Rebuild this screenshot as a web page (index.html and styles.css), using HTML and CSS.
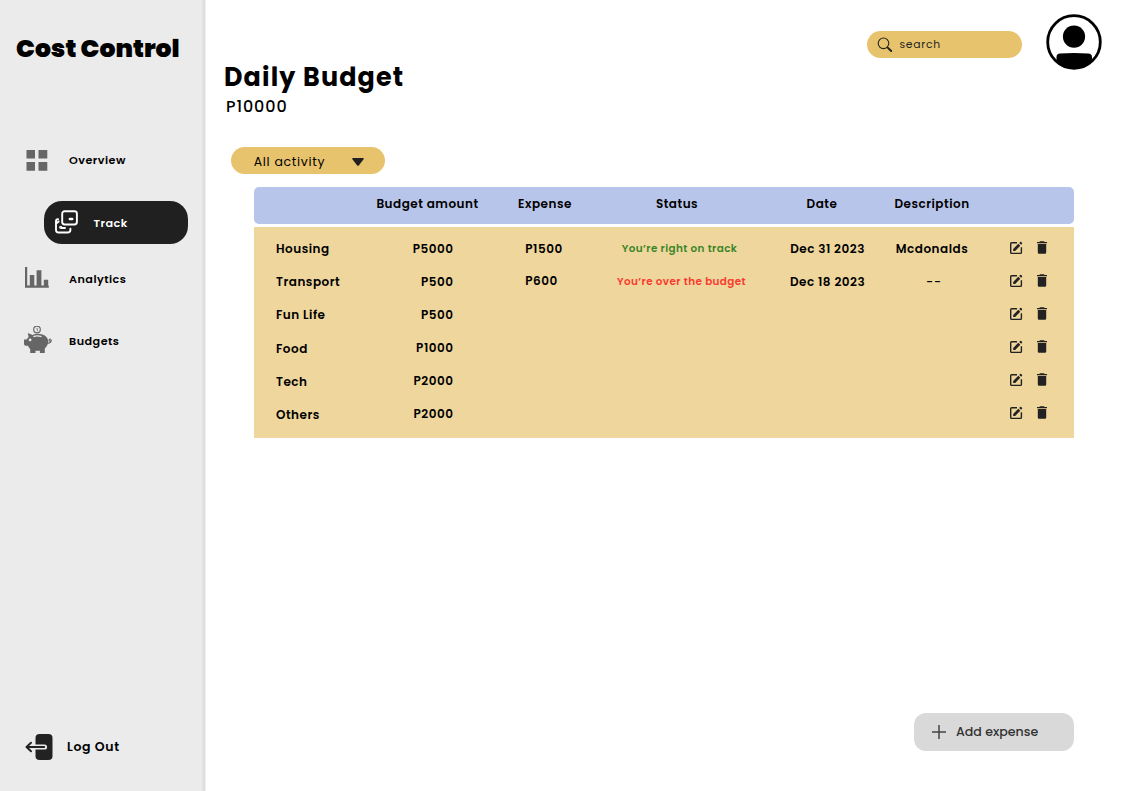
FILE: index.html
```html
<!DOCTYPE html>
<html lang="en">
<head>
<meta charset="utf-8">
<title>Cost Control</title>
<link rel="stylesheet" href="styles.css">
</head>
<body>
<svg class="defs" width="0" height="0">
  <symbol id="edit" viewBox="0 0 14 14"><path d="M8 1.7H2.6Q1.7 1.7 1.7 2.6V11.6Q1.7 12.4 2.6 12.4H11.5Q12.4 12.4 12.4 11.6V6.2" fill="none" stroke="currentColor" stroke-width="1.4"/><path d="M4.2 7.9 9.3 2.8 11.3 4.8 6.2 9.9H4.2ZM10.2 1.9 11.2 1Q11.7.6 12.2 1L13 1.8Q13.4 2.3 13 2.8L12.1 3.8Z" fill="currentColor"/></symbol>
  <symbol id="trash" viewBox="0 0 10 13"><path d="M3 .3H7L7.6 1H10V2.3H0V1H2.4ZM.8 3H9.2V11.5Q9.2 12.7 8 12.7H2Q.8 12.7.8 11.5Z" fill="currentColor"/></symbol>
</svg>
<div class="app">
  <aside class="sidebar">
    <div class="brand">Cost Control</div>
    <nav class="nav">
      <a class="nav-item"><svg class="nav-icon" viewBox="0 0 28 28"><path d="M2.5 3H11V11.5H2.5ZM14.5 3H23.3V11.5H14.5ZM2.5 15H11V23.7H2.5ZM14.5 15H23.3V23.7H14.5Z" fill="#666"/></svg><span>Overview</span></a>
      <a class="nav-item active"><svg class="track-icon" viewBox="0 0 24 24" fill="none" stroke="#fff" stroke-width="1.9" stroke-linecap="round" stroke-linejoin="round"><rect x="7.2" y="1.3" width="14.7" height="13.2" rx="2.4"/><path d="M14.9 9H17.1" stroke-width="2.7"/><path d="M3.1 9.3H2.8Q1 9.3 1 11.2V20Q1 22.5 3.5 22.5H12.5Q15.4 22.5 15.4 20V18.6M1.5 13.2 3.7 11.4M6.5 18H10"/><circle cx="5.7" cy="17.2" r=".6"/></svg><span>Track</span></a>
      <a class="nav-item lower"><svg class="nav-icon" viewBox="0 0 28 28"><path d="M1 3H3.2V21.5H5.8V11H10.3V21.5H12.6V6.3H17.4V21.5H19.8V15.7H24.2V21.5H24.8V23.8H1Z" fill="#666"/></svg><span>Analytics</span></a>
      <a class="nav-item lower"><svg class="nav-icon" viewBox="0 0 28 28"><circle cx="13" cy="3.5" r="3.3" fill="none" stroke="#666" stroke-width="1.2"/><path d="M12.5 2.5H13.3V5.2" fill="none" stroke="#666" stroke-width=".8"/><path d="M3.8 6.9 8.6 8.9Q13 7 18.5 8.6 23.4 10.5 24.3 14.9 24.3 19.2 20.8 22.4V27H15.9V24.7H11.5V27H6.2V23.3L3.8 19.8H1.8Q0 19.8 0 18V13.5H2.5L4.6 10.9Z" fill="#666"/><circle cx="6.1" cy="13.9" r="1.4" fill="#ebebeb"/><path d="M9.4 10.7Q13 9.2 17.5 10.7" fill="none" stroke="#ebebeb" stroke-width="1.3"/><path d="M23.5 17.4Q27.5 16.7 27.2 14.2 26.4 12.4 25.2 13.7 24.6 15.4 27.6 15.3" fill="none" stroke="#666" stroke-width="1.1"/></svg><span>Budgets</span></a>
    </nav>
    <a class="logout"><svg class="logout-icon" viewBox="0 0 28 28"><rect x="10.5" y="1" width="17" height="26" rx="4" fill="#222"/><path d="M10 14H19.5" stroke="#ebebeb" stroke-width="5.2" stroke-linecap="round"/><path d="M1.8 14H19.2M6 9.8 1.5 14 6 18.2" fill="none" stroke="#222" stroke-width="2" stroke-linecap="round" stroke-linejoin="round"/></svg><span>Log Out</span></a>
  </aside>
  <main class="main">
    <header class="top">
      <div class="heading"><h1>Daily Budget</h1><p>P10000</p></div>
      <label class="search"><svg viewBox="0 0 16 16" fill="none" stroke="#24251f"><circle cx="6.5" cy="6.3" r="5.3" stroke-width="1.1"/><path d="M10.3 10.2 12 11.7" stroke-width="1.2"/><path d="M11.3 11.2 14.2 14" stroke-width="2" stroke-linecap="round"/></svg><span>search</span></label>
      <svg class="avatar" viewBox="0 0 56 56"><circle cx="28" cy="28" r="26.3" fill="#fff" stroke="#000" stroke-width="2.8"/><circle cx="28" cy="22.6" r="11.1"/><path d="M10.5 47V43Q10.5 39.8 14 39.5 28 38.3 42 39.5 46 39.8 46 43V47Q38 55 28 55 18 55 10.5 47Z"/></svg>
    </header>
    <button class="filter"><span>All activity</span><svg viewBox="0 0 12 8"><path d="M1.2 0H10.8Q12.5.2 11.4 1.6L7 7.3Q6 8.3 5 7.3L.6 1.6Q-.5.2 1.2 0Z" fill="#202020"/></svg></button>
    <section class="table">
      <div class="thead cols"><span></span><span>Budget amount</span><span>Expense</span><span>Status</span><span>Date</span><span>Description</span></div>
      <div class="tbody">
        <div class="row cols"><span class="name">Housing</span><span class="amount">P5000</span><span class="expense">P1500</span><span class="status ok">You’re right on track</span><span class="date">Dec 31 2023</span><span class="desc">Mcdonalds</span><span class="actions"><svg class="edit"><use href="#edit"/></svg><svg class="trash"><use href="#trash"/></svg></span></div>
        <div class="row cols"><span class="name">Transport</span><span class="amount">P500</span><span class="expense raised">P600</span><span class="status over">You’re over the budget</span><span class="date">Dec 18 2023</span><span class="desc dash">--</span><span class="actions"><svg class="edit"><use href="#edit"/></svg><svg class="trash"><use href="#trash"/></svg></span></div>
        <div class="row cols"><span class="name">Fun Life</span><span class="amount">P500</span><span></span><span></span><span></span><span></span><span class="actions"><svg class="edit"><use href="#edit"/></svg><svg class="trash"><use href="#trash"/></svg></span></div>
        <div class="row cols"><span class="name lowered">Food</span><span class="amount">P1000</span><span></span><span></span><span></span><span></span><span class="actions"><svg class="edit"><use href="#edit"/></svg><svg class="trash"><use href="#trash"/></svg></span></div>
        <div class="row cols"><span class="name lowered">Tech</span><span class="amount">P2000</span><span></span><span></span><span></span><span></span><span class="actions"><svg class="edit"><use href="#edit"/></svg><svg class="trash"><use href="#trash"/></svg></span></div>
        <div class="row cols"><span class="name lowered">Others</span><span class="amount">P2000</span><span></span><span></span><span></span><span></span><span class="actions"><svg class="edit"><use href="#edit"/></svg><svg class="trash"><use href="#trash"/></svg></span></div>
      </div>
    </section>
    <button class="add"><svg viewBox="0 0 14 14"><path d="M7 0V14M0 7H14" stroke="#444" stroke-width="1.5"/></svg><span>Add expense</span></button>
  </main>
</div>
</body>
</html>
```
FILE: styles.css
```css
* { box-sizing: border-box; }
body { margin: 0; background: #fff; color: #000; font: 600 12px/16px Poppins, Inter, sans-serif; }
button { border: 0; padding: 0; font: inherit; color: inherit; }
h1, p { margin: 0; }
span { white-space: nowrap; }
.defs { display: block; }
.app { display: flex; width: 1121px; height: 791px; overflow: hidden; }
.sidebar { width: 206px; flex: none; display: flex; flex-direction: column; background: linear-gradient(to right, #ebebeb 202px, #dedede 203px, #dedede 204.5px, #f8f8f8 206px); }
.brand { margin: 33px 0 0 16px; font-size: 25.1px; line-height: 32px; font-weight: 900; white-space: nowrap; }
.nav { margin-top: 75.5px; display: flex; flex-direction: column; }
.nav-item { height: 40px; padding-left: 24px; display: flex; align-items: center; gap: 17px; font-size: 11.2px; letter-spacing: .47px; }
.nav-item:first-child span { margin-top: -1px; }
.lower span { margin-top: 1px; }
.nav-icon { width: 28px; height: 28px; }
.nav-item.active { margin: 20.5px 0 14px 44px; width: 143.5px; height: 43px; padding-left: 10.5px; border-radius: 18px; gap: 15px; background: #202020; color: #fff; }
.track-icon { width: 24px; height: 24px; margin-top: -2px; }
.nav-item:last-child { margin-top: 22px; }
.logout { margin: auto 0 30px 25px; display: flex; align-items: center; gap: 14px; font-size: 12.5px; letter-spacing: .65px; }
.logout-icon { width: 28px; height: 28px; }
.main { flex: 1; padding-left: 18px; display: flex; flex-direction: column; align-items: flex-start; }
.top { width: 100%; height: 120px; display: flex; align-items: flex-start; }
.heading { width: 643px; padding-top: 60px; }
.heading h1 { font-size: 25.4px; line-height: 34px; font-weight: 700; letter-spacing: 1.15px; }
.heading p { padding: 3px 0 0 2px; font-size: 16px; line-height: 20px; font-weight: 500; letter-spacing: .9px; }
.search { margin-top: 30.5px; width: 154.5px; height: 27.5px; border-radius: 14px; background: #e8c36d; display: flex; align-items: center; padding-left: 9.5px; gap: 7px; font-size: 10.8px; font-weight: 400; letter-spacing: .7px; color: #24251f; }
.search svg { width: 16px; height: 16px; margin-top: 1px; }
.search span { padding-top: 1px; }
.avatar { width: 56px; height: 56px; margin: 14px 0 0 24.5px; }
.filter { margin: 27px 0 0 6.7px; width: 154px; height: 27.3px; border-radius: 14px; background: #e8c36d; display: flex; align-items: center; padding-left: 23px; font-size: 12.5px; font-weight: 400; letter-spacing: .7px; }
.filter span { width: 98px; text-align: left; padding-top: 2px; }
.filter svg { width: 12px; height: 8px; margin-top: 3px; }
.table { margin: 12.7px 0 0 30px; width: 820px; }
.cols { display: grid; grid-template-columns: 110px 127px 108px 156px 134px 86px 99px; letter-spacing: .5px; }
.thead { height: 37px; border-radius: 5px; background: #b8c5ea; padding-top: 9px; text-align: center; }
.tbody { margin-top: 3px; height: 211px; padding-top: 5.7px; background: #eed69d; }
.row { height: 33px; align-items: center; }
.name { padding-left: 22px; }
.amount { padding-right: 37.5px; text-align: right; }
.expense { padding-left: 34.3px; }
.raised { padding-bottom: 2px; }
.lowered { padding-top: 1px; }
.status { padding-left: 9px; display: flex; justify-content: center; font-size: 10.4px; letter-spacing: .4px; padding-bottom: 1px; }
.ok { color: #3c8527; padding-left: 5px; }
.over { color: #f93a2d; }
.date { padding-left: 11px; display: flex; justify-content: center; }
.desc { display: flex; justify-content: center; }
.dash { padding-left: 4px; font-weight: 500; letter-spacing: 1px; }
.actions { display: flex; align-items: center; padding: 0 0 3px 34px; gap: 14px; color: #222; }
.edit { width: 14px; height: 14px; }
.trash { width: 10px; height: 13px; }
.add { margin: auto 0 40px 690px; width: 160px; height: 38px; border-radius: 12px; background: #d9d9d9; color: #333; display: flex; align-items: center; padding-left: 18px; gap: 10px; font-size: 12.6px; font-weight: 500; }
.add svg { width: 14px; height: 14px; }
```
